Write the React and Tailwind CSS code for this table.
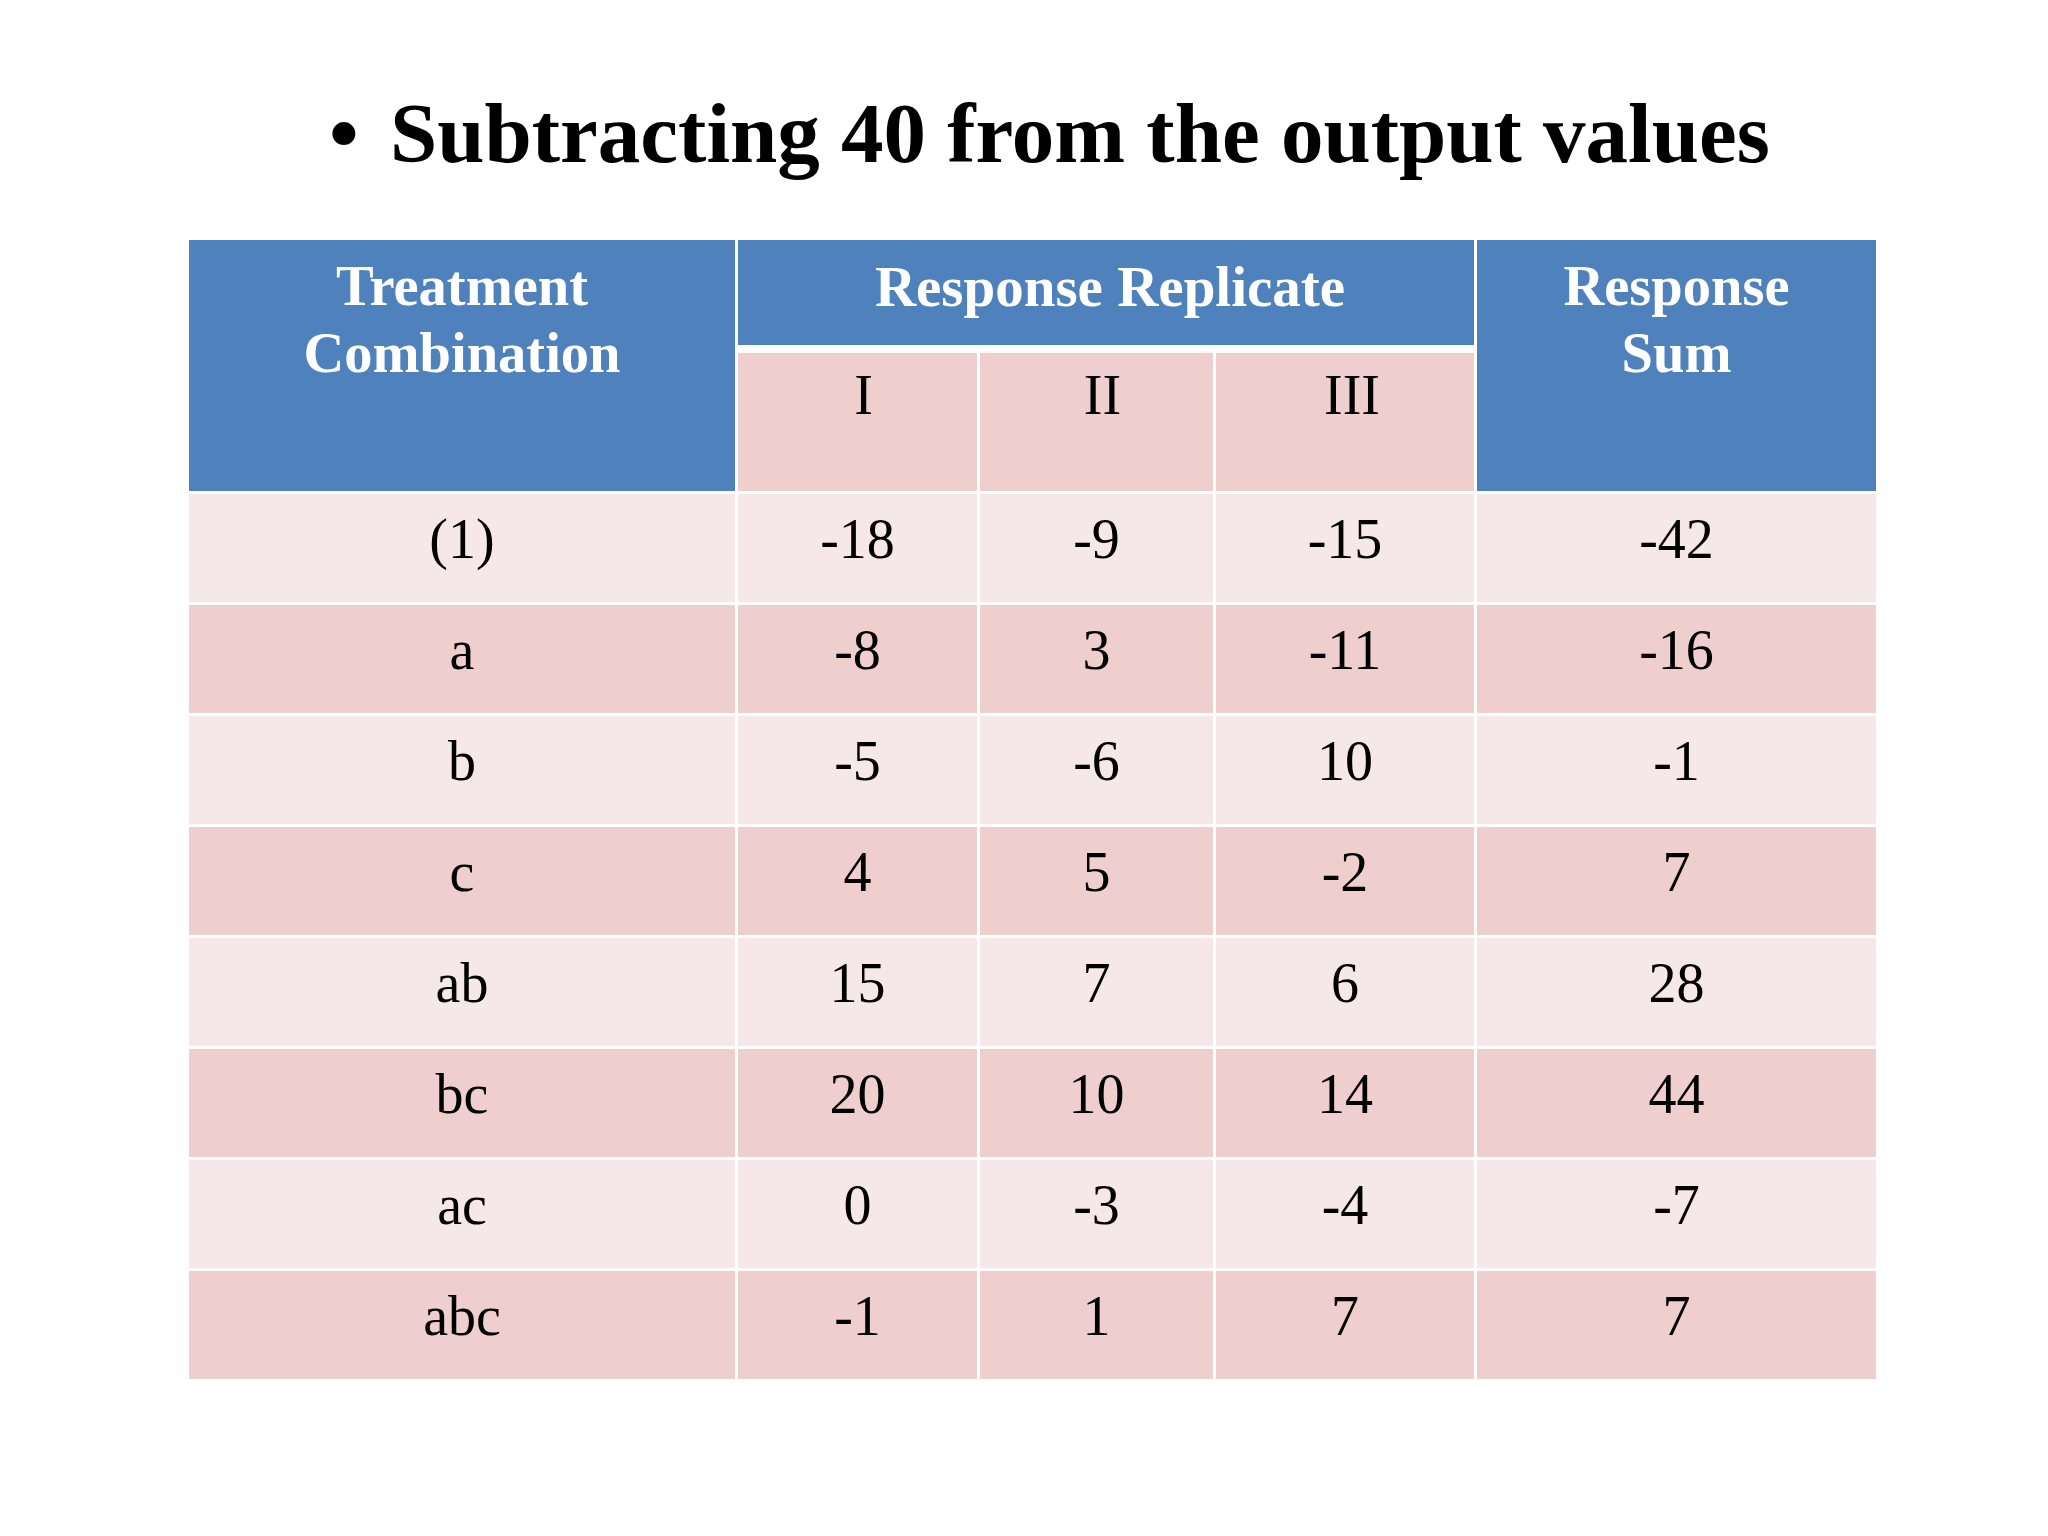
import React from 'react';

const rows = [
  ['(1)', '-18', '-9', '-15', '-42'],
  ['a', '-8', '3', '-11', '-16'],
  ['b', '-5', '-6', '10', '-1'],
  ['c', '4', '5', '-2', '7'],
  ['ab', '15', '7', '6', '28'],
  ['bc', '20', '10', '14', '44'],
  ['ac', '0', '-3', '-4', '-7'],
  ['abc', '-1', '1', '7', '7'],
];

const serif = "font-['Liberation_Serif','Times_New_Roman',serif]";

export default function App() {
  return (
    <div className={`w-[2048px] h-[1536px] bg-white text-black ${serif}`}>
      {/* Title */}
      <div className="pt-[91px] pl-[329px] flex text-[85px] leading-[85px] font-bold">
        <span className="w-[61px]">•</span>
        <span>Subtracting 40 from the output values</span>
      </div>

      {/* Table */}
      <div className="mt-[64px] ml-[189px] w-[1687px] flex flex-col gap-[3px] text-[56px] leading-[67px]">
        {/* Header */}
        <div className="grid grid-cols-[546px_239px_233px_258px_399px] grid-rows-[105px_138px] gap-x-[3px] gap-y-[8px]">
          <div className="row-span-2 bg-[#4f81bd] text-white font-bold text-center text-[56.5px] pt-[13px]">
            Treatment<br />Combination
          </div>
          <div className="col-span-3 bg-[#4f81bd] text-white font-bold text-center text-[57px] pt-[13px] pl-[8px]">
            Response Replicate
          </div>
          <div className="row-span-2 bg-[#4f81bd] text-white font-bold text-center text-[56.5px] pt-[13px]">
            Response<br />Sum
          </div>
          <div className="bg-[#efcfce] text-center pt-[9px] pl-[12px]">I</div>
          <div className="bg-[#efcfce] text-center pt-[9px] pl-[12px]">II</div>
          <div className="bg-[#efcfce] text-center pt-[9px] pl-[14px]">III</div>
        </div>

        {/* Body */}
        <div className="grid grid-cols-[546px_239px_233px_258px_399px] auto-rows-[108px] gap-[3px]">
          {rows.map((r, i) =>
            r.map((v, j) => (
              <div
                key={i + '-' + j}
                className={`${i % 2 === 0 ? 'bg-[#f6e8e8]' : 'bg-[#efcfce]'} text-center pt-[12px]`}
              >
                {v}
              </div>
            ))
          )}
        </div>
      </div>
    </div>
  );
}
